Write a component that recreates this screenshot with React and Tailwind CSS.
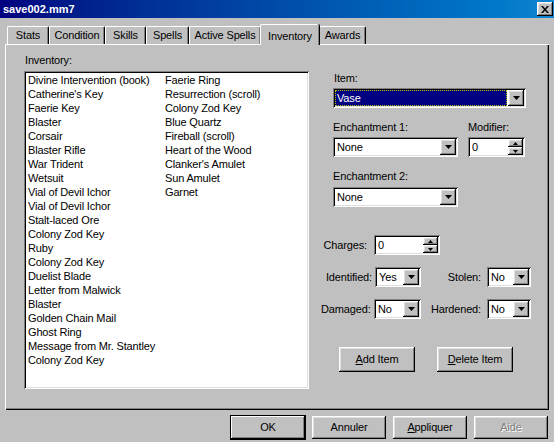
import React from 'react';

const raised = "shadow-[inset_-1px_-1px_#000,inset_1px_1px_#fff,inset_-2px_-2px_#808080,inset_2px_2px_#dfdfdf]";
const sunken = "shadow-[inset_1px_1px_#808080,inset_-1px_-1px_#fff,inset_2px_2px_#000,inset_-2px_-2px_#dfdfdf]";

const col1 = [
    "Divine Intervention (book)", "Catherine's Key", "Faerie Key", "Blaster", "Corsair",
    "Blaster Rifle", "War Trident", "Wetsuit", "Vial of Devil Ichor", "Vial of Devil Ichor",
    "Stalt-laced Ore", "Colony Zod Key", "Ruby", "Colony Zod Key", "Duelist Blade",
    "Letter from Malwick", "Blaster", "Golden Chain Mail", "Ghost Ring",
    "Message from Mr. Stantley", "Colony Zod Key",
];
const col2 = [
    "Faerie Ring", "Resurrection (scroll)", "Colony Zod Key", "Blue Quartz", "Fireball (scroll)",
    "Heart of the Wood", "Clanker's Amulet", "Sun Amulet", "Garnet",
];

const tabs = [
    { label: "Stats", w: "w-[42px]" },
    { label: "Condition", w: "w-[56px]" },
    { label: "Skills", w: "w-[41px]" },
    { label: "Spells", w: "w-[43px]" },
    { label: "Active Spells", w: "w-[72px]" },
    { label: "Inventory", w: "w-[59px]", active: true },
    { label: "Awards", w: "w-[47px]" },
];

const DownArrow = () => (
    <svg width="7" height="4" viewBox="0 0 7 4"><path d="M0 0h7L3.5 4z" fill="#000" /></svg>
);

const DropButton = () => (
    <div className={`w-[16px] h-[16px] shrink-0 flex items-center justify-center bg-[#c0c0c0] ${raised}`}>
        <DownArrow />
    </div>
);

const Combo = ({ value, className, selected }) => (
    <div className={`h-[20px] bg-white p-[2px] flex ${sunken} ${className}`}>
        <div className="flex-1 flex items-center pr-[1px]">
            <span className={`h-[16px] leading-[16px] pl-[2px] ${selected ? "flex-1 bg-[#000080] text-white outline-1 outline-dotted outline-[#c0c000] -outline-offset-1" : ""}`}>
                {value}
            </span>
        </div>
        <DropButton />
    </div>
);

const SpinBtn = ({ up }) => (
    <div className={`w-[15px] h-[8px] flex items-center justify-center bg-[#c0c0c0] ${raised}`}>
        <svg width="5" height="3" viewBox="0 0 5 3">
            <path d={up ? "M0 3h5L2.5 0z" : "M0 0h5L2.5 3z"} fill="#000" />
        </svg>
    </div>
);

const Spin = ({ value, className }) => (
    <div className={`h-[20px] bg-white p-[2px] flex ${sunken} ${className}`}>
        <span className="flex-1 leading-[16px] pl-[2px]">{value}</span>
        <div className="flex flex-col">
            <SpinBtn up />
            <SpinBtn />
        </div>
    </div>
);

const Button = ({ children, className = "", isDefault }) => (
    <div className={`h-[23px] flex items-center justify-center bg-[#c0c0c0] ${isDefault ? "outline-1 outline-black shadow-[inset_-1px_-1px_#000,inset_1px_1px_#fff,inset_-2px_-2px_#808080]" : raised} ${className}`}>
        {children}
    </div>
);

const App = () => {
    return (
        <div className="w-[554px] h-[442px] bg-[#c0c0c0] overflow-hidden font-['Liberation_Sans',Arial,sans-serif] text-[11px] tracking-[-0.15px] text-black">
            {/* title bar */}
            <div className="h-[18px] flex items-center justify-between pl-[3px] pr-[1px] bg-linear-to-r from-[#000080] to-[#1084d0]">
                <span className="text-white font-bold text-[11px] tracking-normal">save002.mm7</span>
                <div className={`w-[16px] h-[14px] flex items-center justify-center bg-[#c0c0c0] ${raised}`}>
                    <svg width="8" height="7" viewBox="0 0 8 7">
                        <path d="M0 0h2l2 2.5L6 0h2L5 3.5 8 7H6L4 4.5 2 7H0l3-3.5z" fill="#000" />
                    </svg>
                </div>
            </div>

            {/* tabs */}
            <div className="mt-[6px] pl-[7px] flex items-end h-[20px]">
                {tabs.map((t) =>
                    t.active ? (
                        <div key={t.label} className={`${t.w} -ml-[1px] h-[21px] -mb-[1px] relative z-10 bg-[#c0c0c0] rounded-t-[2px] border-t border-l border-white shadow-[inset_-1px_0_#808080,1px_0_#000] flex items-start justify-center pt-[3px]`}>
                            {t.label}
                        </div>
                    ) : (
                        <div key={t.label} className={`${t.w} h-[18px] rounded-t-[2px] border-t border-l border-white shadow-[inset_-1px_0_#808080,inset_-2px_0_#c0c0c0] border-r border-r-[#000] flex items-center justify-center`}>
                            {t.label}
                        </div>
                    )
                )}
            </div>

            {/* panel */}
            <div className="ml-[5px] w-[544px] h-[366px] flex shadow-[inset_1px_1px_#fff,inset_-1px_-1px_#000,inset_-2px_-2px_#808080]">
                <div className="pl-[19px] pt-[10px]">
                    <div className="h-[13px] leading-[13px] ml-[1px]">Inventory:</div>
                    <div className={`mt-[4px] w-[285px] h-[318px] bg-white pt-[2px] pl-[4px] flex ${sunken}`}>
                        <div className="w-[137px]">
                            {col1.map((it, i) => (
                                <div key={i} className="h-[14px] leading-[14px] whitespace-nowrap">{it}</div>
                            ))}
                        </div>
                        <div>
                            {col2.map((it, i) => (
                                <div key={i} className="h-[14px] leading-[14px] whitespace-nowrap">{it}</div>
                            ))}
                        </div>
                    </div>
                </div>

                <div className="ml-[12px] pt-[28px] flex flex-col">
                    <div className="ml-[12px]">
                        <div className="h-[13px] leading-[13px] ml-[1px]">Item:</div>
                        <Combo value="Vase" selected className="mt-[3px] w-[193px]" />

                        <div className="mt-[13px] flex gap-[10px]">
                            <div>
                                <div className="h-[13px] leading-[13px]">Enchantment 1:</div>
                                <Combo value="None" className="mt-[3px] w-[125px]" />
                            </div>
                            <div>
                                <div className="h-[13px] leading-[13px]">Modifier:</div>
                                <Spin value="0" className="mt-[3px] w-[57px]" />
                            </div>
                        </div>

                        <div className="mt-[13px] h-[13px] leading-[13px]">Enchantment 2:</div>
                        <Combo value="None" className="mt-[4px] w-[125px]" />
                    </div>

                    <div className="mt-[28px] flex items-center">
                        <div className="w-[49px] text-right pr-[3px]">Charges:</div>
                        <Spin value="0" className="ml-[4px] w-[66px]" />
                    </div>

                    <div className="mt-[12px] flex items-center">
                        <div className="w-[54px] text-right pr-[3px]">Identified:</div>
                        <Combo value="Yes" className="w-[46px]" />
                        <div className="w-[66px] text-right pr-[6px]">Stolen:</div>
                        <Combo value="No" className="w-[44px]" />
                    </div>

                    <div className="mt-[12px] flex items-center">
                        <div className="w-[53px] text-right pr-[4px]">Damaged:</div>
                        <Combo value="No" className="w-[47px]" />
                        <div className="w-[66px] text-right pr-[6px]">Hardened:</div>
                        <Combo value="No" className="w-[44px]" />
                    </div>

                    <div className="mt-[28px] ml-[18px] flex gap-[22px]">
                        <Button className="w-[76px] h-[25px]"><span><u>A</u>dd Item</span></Button>
                        <Button className="w-[76px] h-[25px]"><span><u>D</u>elete Item</span></Button>
                    </div>
                </div>
            </div>

            {/* bottom buttons */}
            <div className="mt-[6px] pr-[6px] flex justify-end gap-[7px]">
                <Button isDefault className="w-[74px]">OK</Button>
                <Button className="w-[74px]">Annuler</Button>
                <Button className="w-[74px]"><span><u>A</u>ppliquer</span></Button>
                <Button className="w-[74px]">
                    <span className="text-[#808080] [text-shadow:1px_1px_#fff]">Aide</span>
                </Button>
            </div>
        </div>
    );
};

export default App;
